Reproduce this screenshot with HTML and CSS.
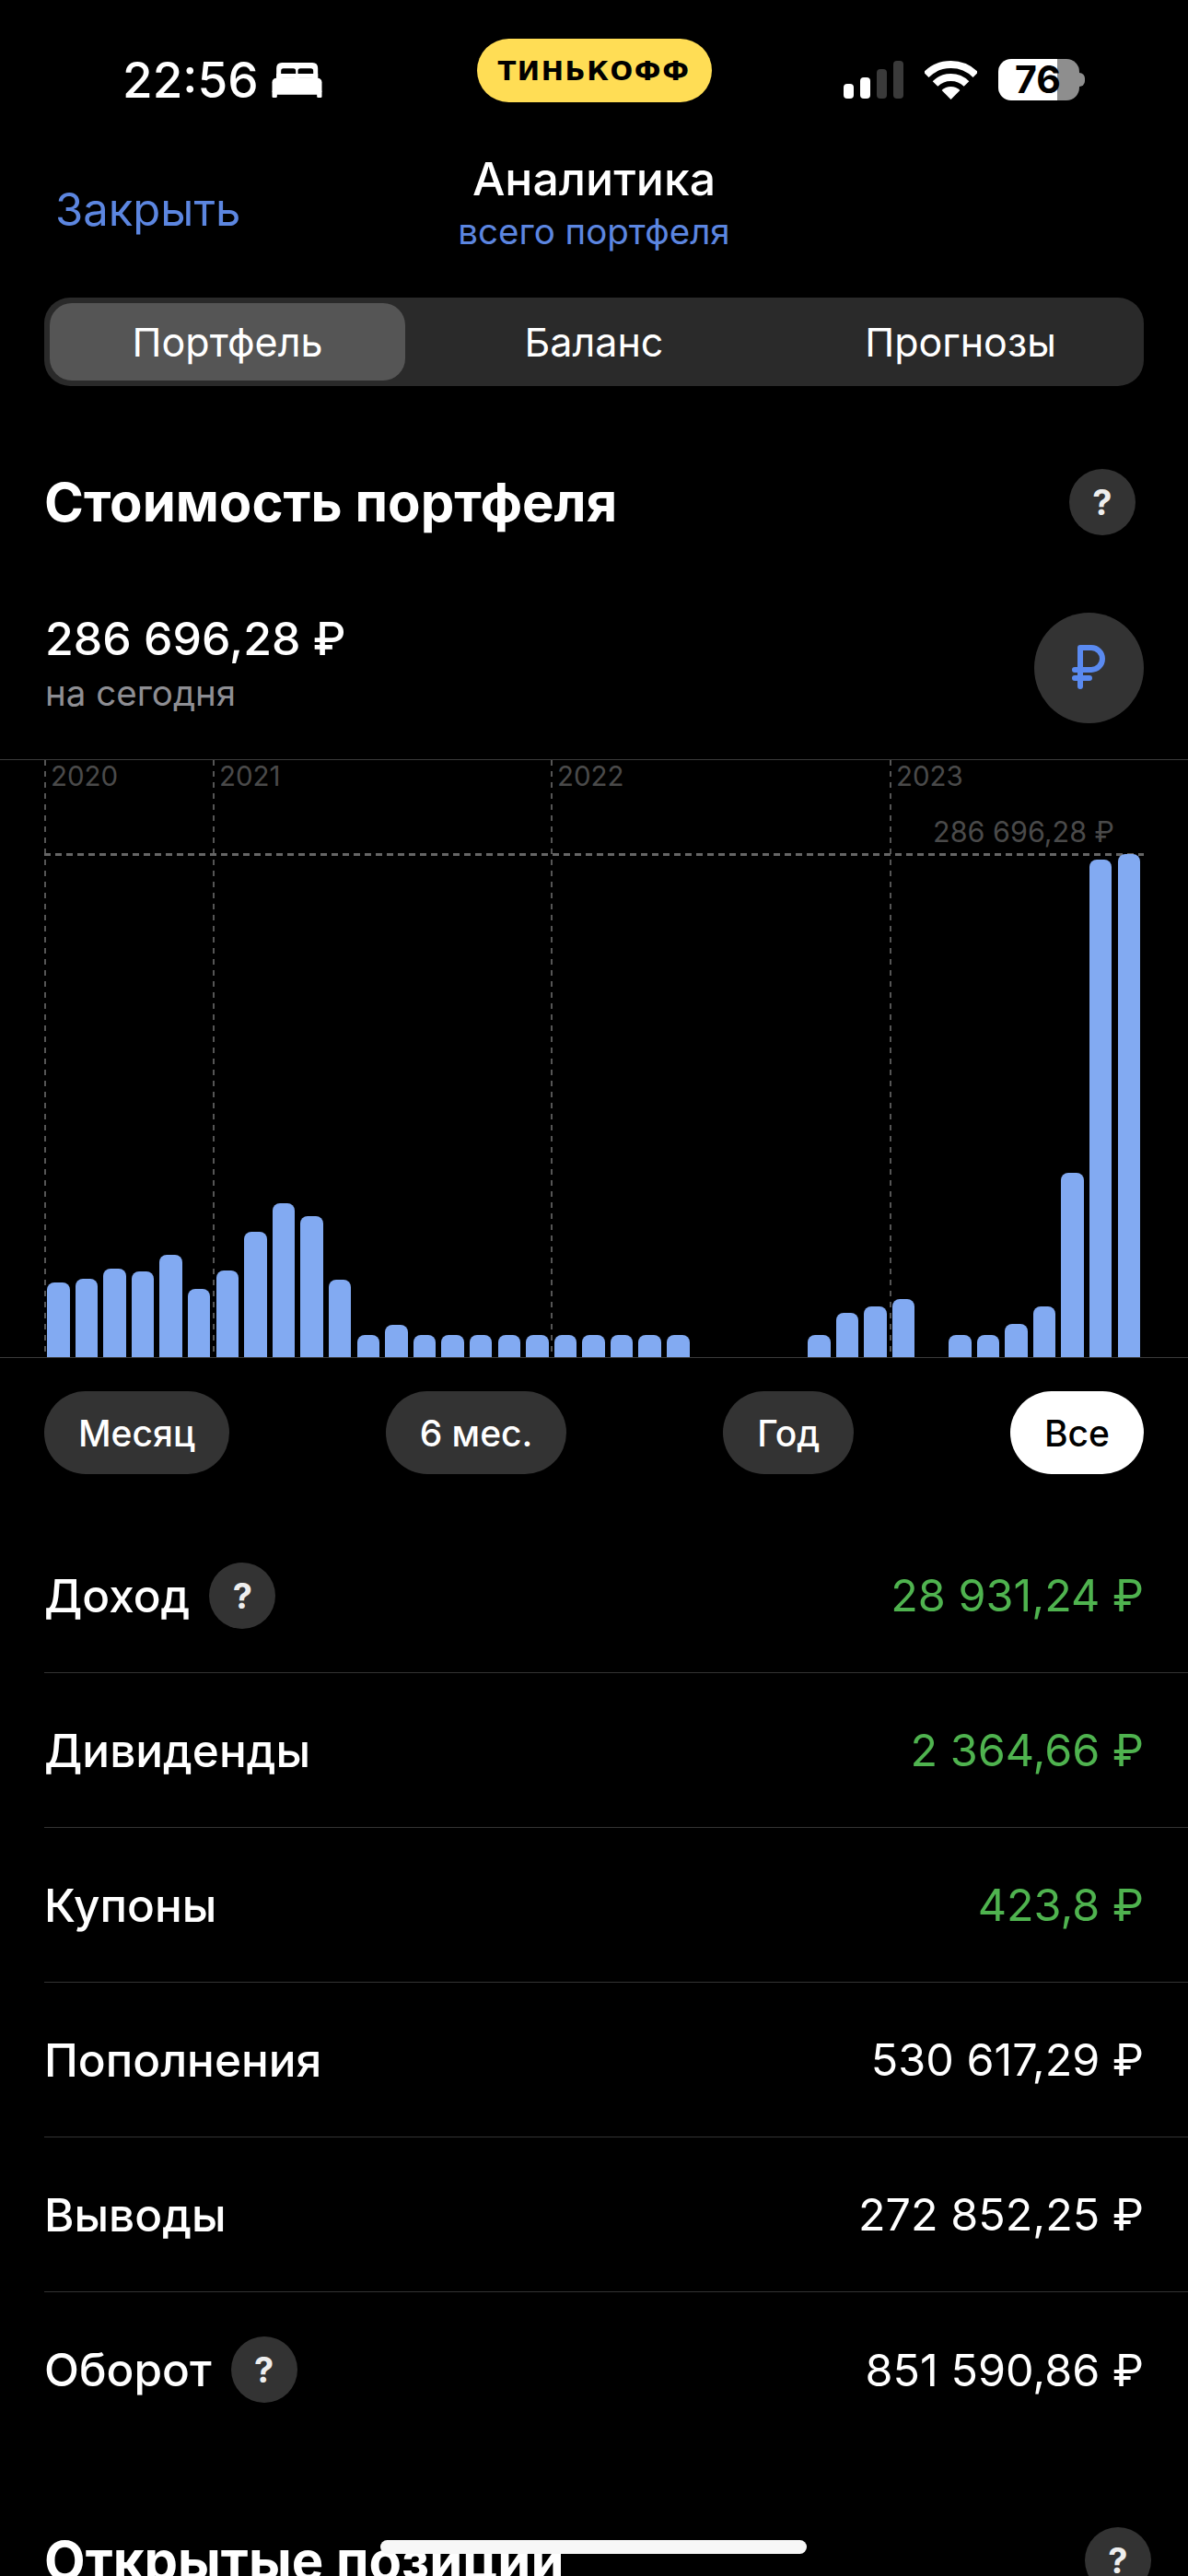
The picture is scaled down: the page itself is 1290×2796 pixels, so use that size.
FILE: index.html
```html
<!DOCTYPE html>
<html lang="ru">
<head>
  <meta charset="UTF-8">
  <meta name="viewport" content="width=device-width, initial-scale=1.0">
  <title>Аналитика</title>
  <link rel="stylesheet" href="styles.css">
</head>
<body>
  <div class="screen">
    <div class="status">
      <div class="status-left">
        <span class="time">22:56</span>
        <svg class="bed" viewBox="0 0 162 114">
          <path fill="#fff" d="M14 52V18Q14 0 32 0H131Q149 0 149 18V52Z"/>
          <rect x="29" y="19" width="48" height="30" rx="8" fill="#000"/>
          <rect x="84" y="19" width="50" height="30" rx="8" fill="#000"/>
          <rect x="14" y="36" width="135" height="14" fill="#fff"/>
          <rect x="0" y="50" width="162" height="54" rx="14" fill="#fff"/>
          <rect x="0" y="90" width="16" height="24" rx="4" fill="#fff"/>
          <rect x="146" y="90" width="16" height="24" rx="4" fill="#fff"/>
        </svg>
      </div>
      <div class="brand">ТИНЬКОФФ</div>
      <div class="status-right">
        <div class="signal">
          <span class="sig sig1"></span>
          <span class="sig sig2"></span>
          <span class="sig sig3"></span>
          <span class="sig sig4"></span>
        </div>
        <svg class="wifi" viewBox="0 0 57 42">
          <path fill="none" stroke="#fff" stroke-width="8" d="M1.63 15.13A38 38 0 0 1 55.37 15.13M11.53 25.03A24 24 0 0 1 45.47 25.03"/>
          <path fill="#fff" d="M28.5 42L18.6 32.1A14 14 0 0 1 38.4 32.1Z"/>
        </svg>
        <div class="battery">
          <div class="battery-body">76</div>
          <div class="battery-nub"></div>
        </div>
      </div>
    </div>

    <div class="nav">
      <a class="close">Закрыть</a>
      <div class="nav-title">
        <div class="title">Аналитика</div>
        <div class="subtitle">всего портфеля</div>
      </div>
      <div></div>
    </div>

    <div class="tabs">
      <div class="tab active">Портфель</div>
      <div class="tab">Баланс</div>
      <div class="tab">Прогнозы</div>
    </div>

    <div class="section-head">
      <h2>Стоимость портфеля</h2>
      <span class="help">?</span>
    </div>

    <div class="total">
      <div>
        <div class="total-value">286 696,28 ₽</div>
        <div class="total-label">на сегодня</div>
      </div>
      <div class="currency">
        <svg class="ruble" viewBox="0 0 40 52">
          <path fill="none" stroke="#5a8af0" stroke-width="6" stroke-linecap="round" stroke-linejoin="round" d="M11 46V4H23A12 12 0 0 1 23 28H5M5 37H21"/>
        </svg>
      </div>
    </div>

    <div class="chart">
      <div class="year year-2020">2020</div>
      <div class="year year-2021">2021</div>
      <div class="year year-2022">2022</div>
      <div class="year year-2023">2023</div>
      <div class="max-line"></div>
      <div class="max-value">286 696,28 ₽</div>
      <div class="bars">
        <div class="bar" style="height:81px"></div>
        <div class="bar" style="height:85px"></div>
        <div class="bar" style="height:96px"></div>
        <div class="bar" style="height:93px"></div>
        <div class="bar" style="height:111px"></div>
        <div class="bar" style="height:74px"></div>
        <div class="bar" style="height:94px"></div>
        <div class="bar" style="height:136px"></div>
        <div class="bar" style="height:167px"></div>
        <div class="bar" style="height:153px"></div>
        <div class="bar" style="height:84px"></div>
        <div class="bar" style="height:24px"></div>
        <div class="bar" style="height:35px"></div>
        <div class="bar" style="height:24px"></div>
        <div class="bar" style="height:24px"></div>
        <div class="bar" style="height:24px"></div>
        <div class="bar" style="height:24px"></div>
        <div class="bar" style="height:24px"></div>
        <div class="bar" style="height:24px"></div>
        <div class="bar" style="height:24px"></div>
        <div class="bar" style="height:24px"></div>
        <div class="bar" style="height:24px"></div>
        <div class="bar" style="height:24px"></div>
        <div class="bar" style="height:0"></div>
        <div class="bar" style="height:0"></div>
        <div class="bar" style="height:0"></div>
        <div class="bar" style="height:0"></div>
        <div class="bar" style="height:24px"></div>
        <div class="bar" style="height:48px"></div>
        <div class="bar" style="height:55px"></div>
        <div class="bar" style="height:63px"></div>
        <div class="bar" style="height:0"></div>
        <div class="bar" style="height:24px"></div>
        <div class="bar" style="height:24px"></div>
        <div class="bar" style="height:36px"></div>
        <div class="bar" style="height:55px"></div>
        <div class="bar" style="height:200px"></div>
        <div class="bar" style="height:540px"></div>
        <div class="bar" style="height:546px"></div>
      </div>
    </div>

    <div class="periods">
      <div class="period">Месяц</div>
      <div class="period">6 мес.</div>
      <div class="period">Год</div>
      <div class="period selected">Все</div>
    </div>

    <div class="rows">
      <div class="row">
        <div class="row-name">Доход <span class="help">?</span></div>
        <div class="row-value green">28 931,24 ₽</div>
      </div>
      <div class="row">
        <div class="row-name">Дивиденды</div>
        <div class="row-value green">2 364,66 ₽</div>
      </div>
      <div class="row">
        <div class="row-name">Купоны</div>
        <div class="row-value green">423,8 ₽</div>
      </div>
      <div class="row">
        <div class="row-name">Пополнения</div>
        <div class="row-value">530 617,29 ₽</div>
      </div>
      <div class="row">
        <div class="row-name">Выводы</div>
        <div class="row-value">272 852,25 ₽</div>
      </div>
      <div class="row">
        <div class="row-name">Оборот <span class="help">?</span></div>
        <div class="row-value">851 590,86 ₽</div>
      </div>
    </div>

    <div class="section-head positions">
      <h2>Открытые позиции</h2>
      <span class="help">?</span>
    </div>

    <div class="home-indicator"></div>
  </div>
</body>
</html>
```

FILE: styles.css
```css
* {
  box-sizing: border-box;
}
body {
  margin: 0;
  background-color: #000;
  color: #fff;
  font-family: Inter, "Noto Sans", sans-serif;
}
.screen {
  position: relative;
  width: 1290px;
  height: 2796px;
  overflow: hidden;
}

/* status bar */
.status {
  display: grid;
  grid-template-columns: 1fr auto 1fr;
  align-items: end;
  height: 111px;
}
.status-left {
  display: flex;
  align-items: center;
  gap: 14px;
  padding-left: 133px;
  margin-bottom: 3px;
}
.time {
  font-size: 53px;
  line-height: 42px;
  font-weight: 500;
}
.bed {
  width: 55px;
  height: 38px;
}
.brand {
  display: flex;
  align-items: center;
  justify-content: center;
  width: 255px;
  height: 69px;
  border-radius: 35px;
  background-color: #ffdd55;
  color: #000;
  font-family: "DejaVu Sans", sans-serif;
  font-size: 29px;
  font-weight: 700;
  letter-spacing: 1.6px;
}
.status-right {
  display: flex;
  justify-content: flex-end;
  align-items: center;
  gap: 23px;
  padding-right: 112px;
  margin-bottom: 2px;
}
.signal {
  display: flex;
  align-items: flex-end;
  gap: 7px;
  height: 41px;
}
.sig {
  width: 11px;
  border-radius: 4px;
  background-color: #fff;
}
.sig1 {
  height: 16px;
}
.sig2 {
  height: 23px;
}
.sig3 {
  height: 32px;
  background-color: #3a3a3a;
}
.sig4 {
  height: 41px;
  background-color: #3a3a3a;
}
.wifi {
  width: 57px;
  height: 42px;
}
.battery {
  display: flex;
  align-items: center;
}
.battery-body {
  width: 88px;
  height: 45px;
  padding-left: 18px;
  border-radius: 14px;
  background: linear-gradient(to right, #fff 64px, #8e8e8e 64px);
  color: #000;
  font-size: 41px;
  line-height: 45px;
  font-weight: 700;
}
.battery-nub {
  width: 6px;
  height: 15px;
  border-radius: 0 8px 8px 0;
  background-color: #8e8e8e;
}

/* navigation */
.nav {
  display: grid;
  grid-template-columns: 1fr auto 1fr;
  margin-top: 55px;
  text-align: center;
}
.close {
  align-self: center;
  padding: 16px 0 0 60px;
  color: #5c86e0;
  font-size: 49px;
  line-height: 60px;
  text-align: left;
}
.title {
  font-size: 50px;
  line-height: 56px;
  font-weight: 500;
}
.subtitle {
  margin-top: 6px;
  color: #5c86e0;
  font-size: 38.5px;
  line-height: 46px;
}

/* tabs */
.tabs {
  display: grid;
  grid-template-columns: repeat(3, 1fr);
  gap: 12px;
  height: 96px;
  margin: 49px 48px 0;
  padding: 6px;
  border-radius: 28px;
  background-color: #2a2a2a;
}
.tab {
  display: flex;
  align-items: center;
  justify-content: center;
  border-radius: 24px;
  font-size: 43px;
}
.tab.active {
  background-color: #555;
}

/* section header */
.section-head {
  display: flex;
  align-items: center;
  justify-content: space-between;
  height: 72px;
  margin-top: 90px;
  padding: 0 57px 0 48px;
}
h2 {
  margin: 0;
  font-size: 58px;
  font-weight: 700;
}
.help {
  display: inline-flex;
  align-items: center;
  justify-content: center;
  width: 72px;
  height: 72px;
  border-radius: 50%;
  background-color: #333;
  color: #eee;
  font-size: 38px;
  font-weight: 700;
}
.positions {
  margin-top: 87px;
  padding-right: 40px;
}

/* total */
.total {
  display: flex;
  justify-content: space-between;
  height: 122px;
  margin-top: 82px;
  padding: 0 48px 0 49px;
}
.total-value {
  font-size: 50px;
  line-height: 60px;
  font-weight: 500;
}
.total-label {
  margin-top: 6px;
  color: #8e8e93;
  font-size: 38.5px;
  line-height: 46px;
}
.currency {
  display: flex;
  align-items: center;
  justify-content: center;
  width: 119px;
  height: 120px;
  margin-top: 2px;
  padding-right: 2px;
  border-radius: 50%;
  background-color: #333;
}
.ruble {
  width: 40px;
  height: 52px;
}

/* chart */
.chart {
  position: relative;
  display: flex;
  align-items: flex-end;
  height: 650px;
  margin-top: 39px;
  padding-left: 51px;
  border-top: 1px solid #3a3a3a;
  border-bottom: 1px solid #3a3a3a;
}
.year {
  position: absolute;
  top: 0;
  bottom: 0;
  padding-left: 7px;
  background: repeating-linear-gradient(to bottom, #555 0, #555 6px, transparent 6px, transparent 12px) left top / 2px 100% no-repeat;
  color: #4a4a4a;
  font-size: 29.5px;
  line-height: 34px;
}
.year-2020 {
  left: 48px;
}
.year-2021 {
  left: 231px;
}
.year-2022 {
  left: 598px;
}
.year-2023 {
  left: 966px;
}
.max-line {
  position: absolute;
  top: 101px;
  left: 48px;
  right: 48px;
  height: 3px;
  background: repeating-linear-gradient(to right, #666 0, #666 7px, transparent 7px, transparent 12px);
}
.max-value {
  position: absolute;
  top: 61px;
  right: 80px;
  color: #4a4a4a;
  font-size: 30.5px;
  line-height: 34px;
}
.bars {
  position: relative;
  display: flex;
  align-items: flex-end;
  gap: 6.1px;
}
.bar {
  width: 24.5px;
  border-radius: 8px 8px 0 0;
  background-color: #82aaf2;
}

/* period switch */
.periods {
  display: flex;
  justify-content: space-between;
  margin: 36px 48px 0;
}
.period {
  display: flex;
  align-items: center;
  height: 90px;
  padding: 0 37px;
  border-radius: 45px;
  background-color: #333;
  font-size: 39px;
  font-weight: 500;
}
.period.selected {
  background-color: #fff;
  color: #000;
}

/* rows */
.rows {
  margin: 48px 0 0 48px;
}
.row {
  display: flex;
  align-items: center;
  justify-content: space-between;
  height: 168px;
  padding-right: 48px;
  border-bottom: 1px solid #333;
}
.row:last-child {
  border-bottom: 0;
}
.row-name {
  display: flex;
  align-items: center;
  gap: 21px;
  font-size: 49.5px;
  font-weight: 500;
}
.row-value {
  font-size: 48.5px;
}
.green {
  color: #4fb34f;
}

.home-indicator {
  position: absolute;
  top: 2757px;
  left: 413px;
  width: 463px;
  height: 15px;
  border-radius: 8px;
  background-color: #f7f7f7;
}
```
